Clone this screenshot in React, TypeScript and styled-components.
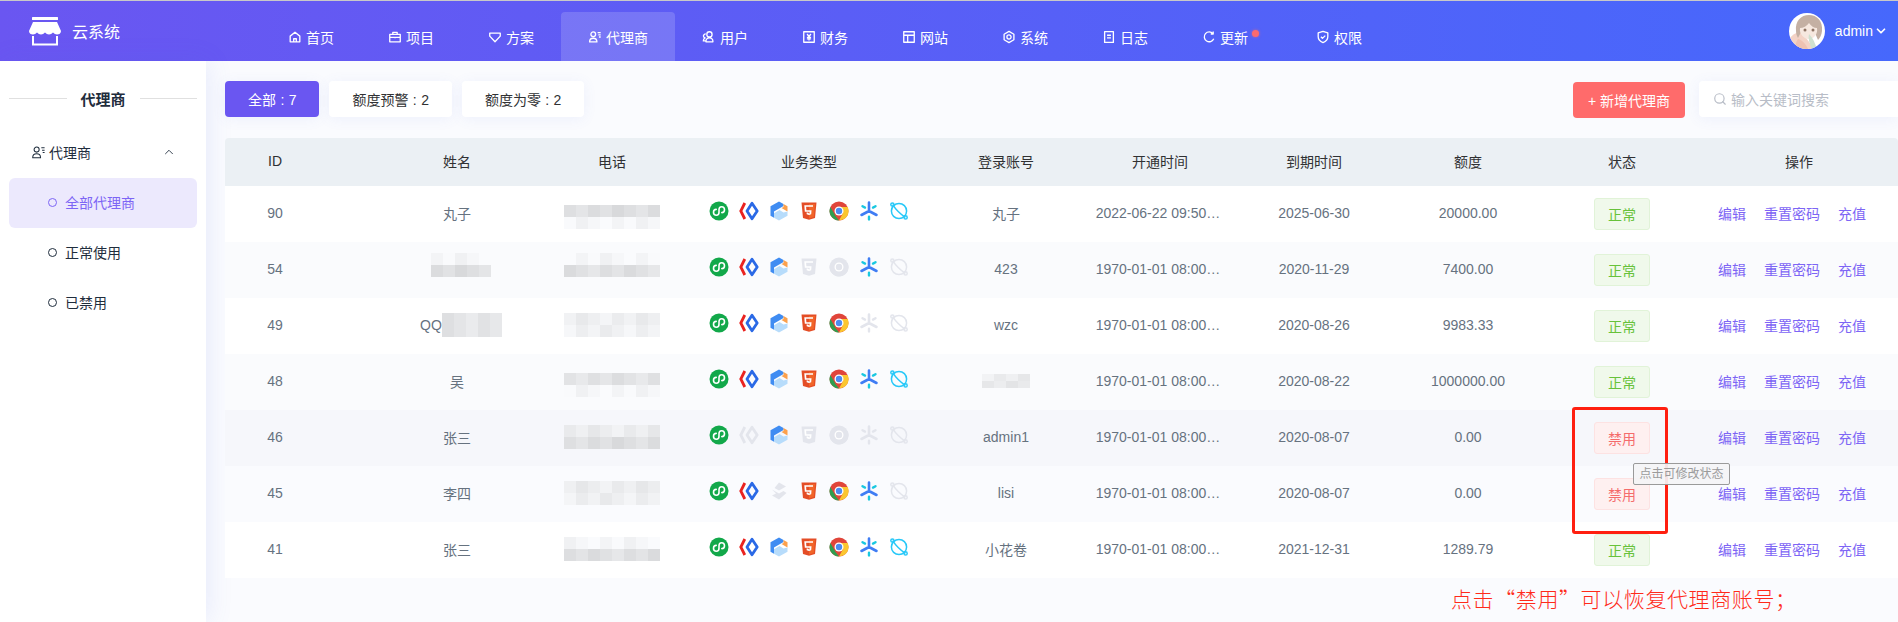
import React from 'react';
import styled, { createGlobalStyle } from 'styled-components';
import { ChevronDown, ChevronUp, Search } from 'lucide-react';

const GlobalStyle = createGlobalStyle`
  html, body {
    margin: 0;
    padding: 0;
    height: 622px;
    overflow: hidden;
    background: #fafbfe;
    font-family: "Liberation Sans", "Noto Sans CJK SC", sans-serif;
    font-size: 14px;
    color: #303133;
  }
  * { box-sizing: border-box; }
`;

const COLUMNS = '155px 154px 156px 238px 156px 152px 156px 152px 156px 198px';
const GRAY = '#e3e5ec';

const Page = styled.div`
  position: relative;
  width: 1898px;
  height: 622px;
  overflow: hidden;
  border-top: 1px solid #c9c9c9;
`;

const Header = styled.header`
  display: flex;
  align-items: center;
  height: 60px;
  background: linear-gradient(90deg, #6a56f1 0%, #4668fc 100%);
  color: #fff;
`;

const Brand = styled.div`
  display: flex;
  align-items: center;
  gap: 11px;
  width: 261px;
  padding-left: 29px;
  font-size: 16px;
`;

const Nav = styled.nav`
  display: flex;
  align-self: flex-end;
  height: 49px;
  flex: 1;
`;

const NavItem = styled.a<{ $active?: boolean; $wide?: boolean }>`
  position: relative;
  display: flex;
  align-items: center;
  gap: 4px;
  padding: 1px ${(p) => (p.$wide ? '41px' : '27px')} 0 27px;
  border-radius: 4px 4px 0 0;
  font-size: 14px;
  white-space: nowrap;
  background: ${(p) => (p.$active ? 'rgba(255, 255, 255, 0.16)' : 'transparent')};
`;

const NavDot = styled.span`
  position: absolute;
  left: 77px;
  top: 18px;
  width: 7px;
  height: 7px;
  border-radius: 50%;
  background: #fb6a6e;
  box-shadow: 0 0 3px rgba(251, 106, 110, 0.7);
`;

const UserBox = styled.div`
  display: flex;
  align-items: center;
  gap: 10px;
  padding-right: 10px;
  font-size: 14px;
`;

const AdminName = styled.span`
  display: flex;
  align-items: center;
  gap: 1px;
`;

const Avatar = styled.svg`
  width: 36px;
  height: 36px;
  border-radius: 50%;
  background: #fff;
`;

const Body = styled.div`
  display: flex;
  height: 561px;
`;

const Sidebar = styled.aside`
  flex: 0 0 206px;
  padding: 0 9px;
  background: #fff;
  box-shadow: 2px 0 24px rgba(80, 110, 230, 0.12);
`;

const SideTitle = styled.div`
  display: flex;
  align-items: center;
  gap: 14px;
  height: 74px;
  font-size: 15px;
  font-weight: 700;
  color: #1f2d3d;

  &::before,
  &::after {
    content: '';
    flex: 1;
    height: 1px;
    background: #e0e0e0;
  }
`;

const SideGroup = styled.div`
  display: flex;
  align-items: center;
  gap: 3px;
  height: 34px;
  margin-bottom: 9px;
  padding: 0 21px 0 22px;
  color: #1f2d3d;

  & > span {
    flex: 1;
  }
`;

const SideLink = styled.a<{ $active?: boolean }>`
  display: flex;
  align-items: center;
  gap: 8px;
  height: 50px;
  padding: 0 0 2px 39px;
  border-radius: 6px;
  color: ${(p) => (p.$active ? '#7d65f5' : '#1f2d3d')};
  background: ${(p) => (p.$active ? '#ece9fd' : 'transparent')};

  &::before {
    content: '';
    width: 7px;
    height: 7px;
    border-radius: 50%;
    border: 1.5px solid currentColor;
  }
`;

const Main = styled.main`
  flex: 1;
  min-width: 0;
  padding: 20px 0 0 19px;
`;

const Toolbar = styled.div`
  display: flex;
  align-items: flex-start;
  gap: 10px;
  height: 57px;
`;

const FilterButton = styled.button<{ $active?: boolean }>`
  height: 36px;
  padding: 0 23px;
  border: 0;
  border-radius: 4px;
  font: inherit;
  word-spacing: 0.5px;
  white-space: nowrap;
  color: ${(p) => (p.$active ? '#fff' : '#303133')};
  background: ${(p) => (p.$active ? '#6a56f1' : '#fff')};
  box-shadow: 0 2px 14px rgba(90, 120, 230, 0.08);
`;

const AddButton = styled.button`
  width: 112px;
  height: 36px;
  margin: 1px 4px 0 auto;
  border: 0;
  border-radius: 4px;
  font: inherit;
  color: #fff;
  background: #ff6b6b;
`;

const SearchBox = styled.div`
  display: flex;
  align-items: center;
  gap: 4px;
  width: 199px;
  height: 36px;
  padding-left: 14px;
  border-radius: 4px 0 0 4px;
  color: #b8bdc7;
  background: #fff;
  box-shadow: 0 2px 14px rgba(90, 120, 230, 0.08);
`;

const HeadRow = styled.div`
  display: grid;
  grid-template-columns: ${COLUMNS};
  height: 48px;
  border-radius: 4px 4px 0 0;
  background: #ebf0f4;
  color: #303133;
`;

const Row = styled.div<{ $bg: string }>`
  display: grid;
  grid-template-columns: ${COLUMNS};
  height: 56px;
  background: ${(p) => p.$bg};
  color: #66727f;
`;

const Cell = styled.div<{ $id?: boolean }>`
  display: flex;
  align-items: center;
  justify-content: center;
  min-width: 0;
  padding: 0 ${(p) => (p.$id ? '55px' : '0')} 2px 0;
`;

const NameBlur = styled.span`
  display: inline-flex;
  align-items: center;
  margin-left: 8px;
`;

const Stamp = styled.span`
  margin-right: 4px;
`;

const Icons = styled.div`
  display: flex;
  gap: 10px;
  margin-top: -4px;
`;

const IconSvg = styled.svg`
  display: block;
  width: 20px;
  height: 20px;
`;

const Tag = styled.span<{ $off?: boolean }>`
  display: flex;
  align-items: center;
  justify-content: center;
  width: 56px;
  height: 32px;
  margin-bottom: -2px;
  border-radius: 3px;
  font-size: 14px;
  color: ${(p) => (p.$off ? '#f56c6c' : '#67c23a')};
  background: ${(p) => (p.$off ? '#fef0f0' : '#f0f9eb')};
  border: 1px solid ${(p) => (p.$off ? '#fde2e2' : '#e1f3d8')};
`;

const Actions = styled.div`
  display: flex;
  gap: 18px;
  margin-right: 14px;
  color: #7d65f5;
`;

const MosaicSvg = styled.svg<{ $shift: number }>`
  display: block;
  flex: none;
  margin-top: ${(p) => p.$shift}px;
`;

const RedFrame = styled.div`
  position: absolute;
  left: 1572px;
  top: 406px;
  width: 96px;
  height: 127px;
  border: 3px solid #ff1f10;
  border-radius: 3px;
`;

const Tooltip = styled.div`
  position: absolute;
  left: 1633px;
  top: 462px;
  width: 97px;
  height: 22px;
  line-height: 20px;
  text-align: center;
  border: 1px solid #9a9a9a;
  border-radius: 2px;
  font-size: 12px;
  color: #9b9b9b;
  background: rgba(244, 244, 246, 0.92);
`;

const Note = styled.div`
  position: absolute;
  left: 1451px;
  top: 582px;
  font-family: "Noto Sans CJK SC", sans-serif;
  font-size: 21px;
  font-weight: 300;
  letter-spacing: 0.6px;
  line-height: 30px;
  white-space: nowrap;
  color: #ff2a1a;
`;

const glyph = {
  home: <path d="M2.5 7 8 2.5 13.5 7v6.5h-11zM6.5 13.5V10h3v3.5" />,
  case: <path d="M2 5h12v8.5H2zM5.5 5V2.8h5V5M2 8.5h12M8 7.8v1.5" />,
  gem: <path d="M2 3.5h12V7l-6 6.5L2 7z" />,
  agent: <path d="M6 2.2a2.7 2.7 0 1 1 0 5.4 2.7 2.7 0 0 1 0-5.4zM1.8 13.6c0-3 1.6-4.2 4.2-4.2s4.2 1.2 4.2 4.2zM11 3h3.5M11.8 5.5h2.7M12.5 8h2" />,
  user: <path d="M8.5 2a3 3 0 1 1 0 6 3 3 0 0 1 0-6zM4.5 13.5c0-3 1.5-4.5 4-4.5s4 1.5 4 4.5zM4.2 4.6A2.2 2.2 0 0 0 3.6 9C2.2 9.6 1.5 10.6 1.5 12.5h3" />,
  money: <path d="M2 2h12v12H2zM5.8 4.6 8 7.4l2.2-2.8M8 7.4V12M5.6 8.4h4.8M5.6 10.2h4.8" />,
  site: <path d="M2 2h12v12H2zM2 6h12M6.5 6v8" />,
  gear: <path d="M8 1.6 13.6 4.8v6.4L8 14.4 2.4 11.2V4.8zM8 5.6a2.4 2.4 0 1 1 0 4.8 2.4 2.4 0 0 1 0-4.8z" />,
  log: <path d="M3 1.8h10v12.4H3zM5.8 6h4.4M5.8 9h4.4" />,
  update: <path d="M12.5 4.2A5.6 5.6 0 1 0 13.4 10M12.8 1.8v2.8H10" />,
  auth: <path d="M8 1.6 13.5 3.4v4.4c0 3.2-2.4 5.4-5.5 6.6-3.1-1.2-5.5-3.4-5.5-6.6V3.4zM5.6 7.8 7.4 9.6l3.2-3.2" />,
};

const Glyph = ({ name, size = 14, stroke = 1.5 }: { name: keyof typeof glyph; size?: number; stroke?: number }) => (
  <svg width={size} height={size} viewBox="0 0 16 16" fill="none" stroke="currentColor" strokeWidth={stroke} strokeLinejoin="round">
    {glyph[name]}
  </svg>
);

const Logo = () => (
  <svg width="32" height="29" viewBox="0 0 32 29">
    <rect x="3" y="0" width="26" height="3" rx="0.5" fill="#fff" />
    <path d="M4 5h24l4 9c0 2.4-1.9 3.6-4 3.6-1.6 0-2.7-.8-4-2-1.3 1.2-2.4 2-4 2s-2.7-.8-4-2c-1.3 1.2-2.4 2-4 2s-2.7-.8-4-2c-1.3 1.2-2.4 2-4 2-2.1 0-4-1.2-4-3.6z" fill="#fff" />
    <path d="M4 19v8.5h24V19" fill="none" stroke="#fff" strokeWidth="2" />
  </svg>
);

const AvatarPicture = () => (
  <Avatar viewBox="0 0 36 36">
    <path d="M0 36V27c3-6 8-8 13-8l12 17z" fill="#f3d3c6" />
    <path d="M7 18C6 8 12 2 20 2s14 6 13 16c-.4 4-2 7-4 9l-3-7-14-1-3 6c-1-2-2-4-2-7z" fill="#c4b0a3" />
    <path d="M11 15c3 0 7-2 9-5 2 3 5 5 8 5 1 6-3 11-8 11s-10-5-9-11z" fill="#f6e8df" />
    <circle cx="16" cy="17" r="1.5" fill="#8d7363" />
    <circle cx="24" cy="17" r="1.5" fill="#8d7363" />
    <path d="M20 21c-1 4 0 9 3 15h5c-2-6-4-11-8-15z" fill="#cfe0cf" />
    <path d="M9 26c4 1 8 5 10 10H6c0-4 1-7 3-10z" fill="#eec2b2" />
  </Avatar>
);

type IconProps = { off?: boolean };

const LinkIcon = ({ off }: IconProps) => (
  <IconSvg viewBox="0 0 20 20">
    <circle cx="10" cy="10" r="9.5" fill={off ? GRAY : '#12a84a'} />
    <path d="M7.2 8.4c-1.6 0-2.7 1.2-2.7 2.8s1.2 3 2.9 3 2.6-1.3 2.6-3V8.8c0-1.7 1-3 2.6-3s2.9 1.3 2.9 3-1.1 2.8-2.7 2.8" fill="none" stroke="#fff" strokeWidth="1.6" strokeLinecap="round" />
  </IconSvg>
);

const CodeIcon = ({ off }: IconProps) => (
  <IconSvg viewBox="0 0 20 20">
    <path d="M5.8 2 1.8 10l4 8" fill="none" stroke={off ? GRAY : '#ea2320'} strokeWidth="2.8" />
    <path d="M13 2.2 18.2 10 13 17.8 8 10z" fill="none" stroke={off ? GRAY : '#2a69e6'} strokeWidth="2.8" strokeLinejoin="round" />
  </IconSvg>
);

const BoxIcon = ({ off }: IconProps) =>
  off ? (
    <IconSvg viewBox="0 0 20 20">
      <path d="M10 1.5 17 5.5 10 9.5 5.5 7zM3 8.5l7 4 4.5-2.5 3 2L10 18.5 3 14.5 7 12.5z" fill={GRAY} />
    </IconSvg>
  ) : (
    <IconSvg viewBox="0 0 20 20">
      <path d="M10 .5l4.5 2.5v2L5 10.5v6.2l-3.5-1.9V5.2z" fill="#3f8cf2" />
      <path d="M14.5 3l4 2.2v5.4l-6-3.6 2-1z" fill="#fba04c" />
      <path d="M5 12.3 10.5 9l4 2.6 4-1v4.2L10 19.5l-5-2.8z" fill="#b7dcfb" />
    </IconSvg>
  );

const HtmlIcon = ({ off }: IconProps) => (
  <IconSvg viewBox="0 0 20 20">
    <path d="M2.5 1.5h15L16 17l-6 1.8L4 17z" fill={off ? GRAY : '#e44d26'} />
    <path d="M10 3v14.4l4.8-1.4L16 3z" fill={off ? GRAY : '#f16529'} />
    <path d="M14 5H6.2l.4 5h5l-.2 2.6L10 13.2l-1.5-.6-.1-1.1" fill="none" stroke="#fff" strokeWidth="1.7" />
  </IconSvg>
);

const ChromeIcon = ({ off }: IconProps) => (
  <IconSvg viewBox="0 0 20 20">
    <circle cx="10" cy="10" r="9.5" fill={off ? GRAY : '#e0453a'} />
    <path d="M1.4 6 6 14l-.2 0L10 19.5A9.5 9.5 0 0 1 1.4 6z" fill={off ? GRAY : '#2f9e4f'} />
    <path d="M10 6h8.7A9.5 9.5 0 0 1 10 19.5L14 12z" fill={off ? GRAY : '#fbc62f'} />
    <circle cx="10" cy="10" r="4.5" fill="#fff" />
    <circle cx="10" cy="10" r="3.2" fill={off ? GRAY : '#4c8bf0'} />
  </IconSvg>
);

const StarIcon = ({ off }: IconProps) => (
  <IconSvg viewBox="0 0 20 20">
    <path d="M10 1.5V10M10 10 2.5 14M10 10l7.5 4" fill="none" stroke={off ? GRAY : '#3f7df4'} strokeWidth="2.6" strokeLinecap="round" />
    <path d="M3.5 5.2 6 6.6M16.5 5.2 14 6.6M10 15.8v2.6" fill="none" stroke={off ? GRAY : '#19c8e0'} strokeWidth="2.4" strokeLinecap="round" />
  </IconSvg>
);

const PlanetIcon = ({ off }: IconProps) => (
  <IconSvg viewBox="0 0 20 20">
    <g fill="none" stroke={off ? GRAY : '#27c8f8'} strokeWidth="1.5">
      <circle cx="10" cy="10" r="7.6" />
      <path d="M3.6 3.6c3 4.5 8 9.6 12.8 12.8" />
      <circle cx="3.4" cy="3.6" r="1.6" />
      <circle cx="16.6" cy="16.4" r="1.6" />
    </g>
  </IconSvg>
);

const ICON_SET = [LinkIcon, CodeIcon, BoxIcon, HtmlIcon, ChromeIcon, StarIcon, PlanetIcon];

interface MosaicProps {
  cols: number;
  seed: number;
  tones: number[];
  height?: number;
  shift?: number;
}

// blurred-out personal data, tones holds one grey level per block row
const Mosaic = ({ cols, seed, tones, height = 12, shift = 0 }: MosaicProps) => (
  <MosaicSvg width={cols * 12} height={tones.length * height} $shift={shift}>
    {Array.from({ length: tones.length * cols }, (_, i) => {
      const row = Math.floor(i / cols);
      const shade = Math.min(tones[row] + (((seed + i) * 7) % 5) * 3 - 6, 250);
      return <rect key={i} x={(i % cols) * 12} y={row * height} width="12" height={height} fill={`rgb(${shade},${shade + 1},${shade + 3})`} />;
    })}
  </MosaicSvg>
);

interface Agent {
  id: number;
  name: React.ReactNode;
  phoneSeed: number;
  phoneTones: number[];
  phoneShift: number;
  icons: boolean[];
  account: React.ReactNode;
  opened: string;
  expires: string;
  credit: string;
  disabled?: boolean;
  bg: string;
}

const flags = (s: string) => s.split('').map((c) => c === '1');

const AGENTS: Agent[] = [
  { id: 90, name: '丸子', phoneSeed: 1, phoneTones: [222, 246], phoneShift: 8, icons: flags('1111111'), account: '丸子', opened: '2022-06-22 09:50…', expires: '2025-06-30', credit: '20000.00', bg: '#fff' },
  { id: 54, name: <NameBlur><Mosaic cols={5} seed={3} tones={[246, 222]} shift={-8} /></NameBlur>, phoneSeed: 2, phoneTones: [246, 224], phoneShift: -8, icons: flags('1110010'), account: '423', opened: '1970-01-01 08:00…', expires: '2020-11-29', credit: '7400.00', bg: '#fafbfd' },
  { id: 49, name: <NameBlur>QQ<Mosaic cols={5} seed={5} tones={[228, 228]} /></NameBlur>, phoneSeed: 4, phoneTones: [238, 240], phoneShift: 0, icons: flags('1111100'), account: 'wzc', opened: '1970-01-01 08:00…', expires: '2020-08-26', credit: '9983.33', bg: '#fff' },
  { id: 48, name: '吴', phoneSeed: 6, phoneTones: [226, 246], phoneShift: 8, icons: flags('1111111'), account: <Mosaic cols={4} seed={7} tones={[236, 230]} height={7} />, opened: '1970-01-01 08:00…', expires: '2020-08-22', credit: '1000000.00', bg: '#fafbfd' },
  { id: 46, name: '张三', phoneSeed: 8, phoneTones: [236, 222], phoneShift: 0, icons: flags('1010000'), account: 'admin1', opened: '1970-01-01 08:00…', expires: '2020-08-07', credit: '0.00', disabled: true, bg: '#f6f7fb' },
  { id: 45, name: '李四', phoneSeed: 9, phoneTones: [236, 238], phoneShift: 0, icons: flags('1101110'), account: 'lisi', opened: '1970-01-01 08:00…', expires: '2020-08-07', credit: '0.00', disabled: true, bg: '#fafbfe' },
  { id: 41, name: '张三', phoneSeed: 10, phoneTones: [246, 224], phoneShift: 0, icons: flags('1111111'), account: '小花卷', opened: '1970-01-01 08:00…', expires: '2021-12-31', credit: '1289.79', bg: '#fff' },
];

const NAV: { label: string; icon: keyof typeof glyph }[] = [
  { label: '首页', icon: 'home' },
  { label: '项目', icon: 'case' },
  { label: '方案', icon: 'gem' },
  { label: '代理商', icon: 'agent' },
  { label: '用户', icon: 'user' },
  { label: '财务', icon: 'money' },
  { label: '网站', icon: 'site' },
  { label: '系统', icon: 'gear' },
  { label: '日志', icon: 'log' },
  { label: '更新', icon: 'update' },
  { label: '权限', icon: 'auth' },
];

const HEADINGS = ['ID', '姓名', '电话', '业务类型', '登录账号', '开通时间', '到期时间', '额度', '状态', '操作'];

const App: React.FC = () => (
  <Page>
    <GlobalStyle />
    <Header>
      <Brand>
        <Logo />
        云系统
      </Brand>
      <Nav>
        {NAV.map((item) => (
          <NavItem key={item.label} $active={item.label === '代理商'} $wide={item.label === '更新'}>
            <Glyph name={item.icon} />
            {item.label}
            {item.label === '更新' && <NavDot />}
          </NavItem>
        ))}
      </Nav>
      <UserBox>
        <AvatarPicture />
        <AdminName>
          admin
          <ChevronDown size={14} strokeWidth={3} />
        </AdminName>
      </UserBox>
    </Header>
    <Body>
      <Sidebar>
        <SideTitle>代理商</SideTitle>
        <SideGroup>
          <Glyph name="agent" size={15} stroke={1.1} />
          <span>代理商</span>
          <ChevronUp size={14} strokeWidth={1.5} />
        </SideGroup>
        <SideLink $active>全部代理商</SideLink>
        <SideLink>正常使用</SideLink>
        <SideLink>已禁用</SideLink>
      </Sidebar>
      <Main>
        <Toolbar>
          <FilterButton $active>全部 : 7</FilterButton>
          <FilterButton>额度预警 : 2</FilterButton>
          <FilterButton>额度为零 : 2</FilterButton>
          <AddButton>+ 新增代理商</AddButton>
          <SearchBox>
            <Search size={14} />
            输入关键词搜索
          </SearchBox>
        </Toolbar>
        <HeadRow>
          {HEADINGS.map((title, i) => (
            <Cell key={title} $id={i === 0}>{title}</Cell>
          ))}
        </HeadRow>
        {AGENTS.map((agent) => (
          <Row key={agent.id} $bg={agent.bg}>
            <Cell $id>{agent.id}</Cell>
            <Cell>{agent.name}</Cell>
            <Cell>
              <Mosaic cols={8} seed={agent.phoneSeed} tones={agent.phoneTones} shift={agent.phoneShift} />
            </Cell>
            <Cell>
              <Icons>
                {ICON_SET.map((Icon, i) => (
                  <Icon key={i} off={!agent.icons[i]} />
                ))}
              </Icons>
            </Cell>
            <Cell>{agent.account}</Cell>
            <Cell><Stamp>{agent.opened}</Stamp></Cell>
            <Cell>{agent.expires}</Cell>
            <Cell>{agent.credit}</Cell>
            <Cell><Tag $off={agent.disabled}>{agent.disabled ? '禁用' : '正常'}</Tag></Cell>
            <Cell>
              <Actions>
                <span>编辑</span>
                <span>重置密码</span>
                <span>充值</span>
              </Actions>
            </Cell>
          </Row>
        ))}
      </Main>
    </Body>
    <RedFrame />
    <Tooltip>点击可修改状态</Tooltip>
    <Note>点击“禁用”可以恢复代理商账号；</Note>
  </Page>
);

export default App;
